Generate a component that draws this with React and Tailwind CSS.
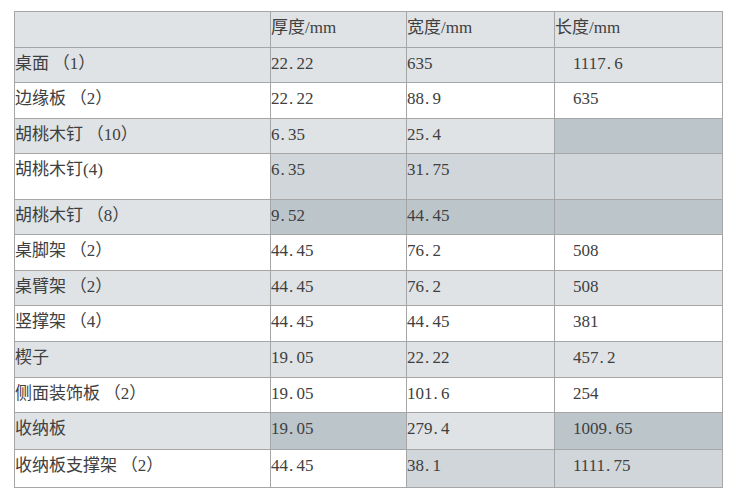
import React from "react";

const L = "bg-[#dfe3e6]";
const D = "bg-[#bcc5ca]";
const M = "bg-[#d1d6da]";
const W = "bg-white";

const rows = [
  { h: "h-[36px]", c: ["", "厚度/mm", "宽度/mm", "长度/mm"], bg: [L, L, L, L], head: true },
  { h: "h-[35px]", c: ["桌面 （1）", "22.22", "635", "1117.6"], bg: [L, L, L, L] },
  { h: "h-[36px]", c: ["边缘板 （2）", "22.22", "88.9", "635"], bg: [W, W, W, W] },
  { h: "h-[35px]", c: ["胡桃木钉 （10）", "6.35", "25.4", ""], bg: [L, L, L, D] },
  { h: "h-[46px]", c: ["胡桃木钉(4)", "6.35", "31.75", ""], bg: [W, M, M, M] },
  { h: "h-[35px]", c: ["胡桃木钉 （8）", "9.52", "44.45", ""], bg: [L, D, D, D] },
  { h: "h-[36px]", c: ["桌脚架 （2）", "44.45", "76.2", "508"], bg: [W, W, W, W] },
  { h: "h-[35px]", c: ["桌臂架 （2）", "44.45", "76.2", "508"], bg: [L, L, L, L] },
  { h: "h-[36px]", c: ["竖撑架 （4）", "44.45", "44.45", "381"], bg: [W, W, W, W] },
  { h: "h-[36px]", c: ["楔子", "19.05", "22.22", "457.2"], bg: [L, L, L, L] },
  { h: "h-[35px]", c: ["侧面装饰板 （2）", "19.05", "101.6", "254"], bg: [W, W, W, W] },
  { h: "h-[37px]", c: ["收纳板", "19.05", "279.4", "1009.65"], bg: [L, D, L, D] },
  { h: "h-[38px]", c: ["收纳板支撑架 （2）", "44.45", "38.1", "1111.75"], bg: [W, W, M, M] },
];

function Ascii({ s }) {
  const bits = s.split(/(\.)/).filter((p) => p !== "");
  return (
    <span className="font-['Liberation_Serif',serif] text-[17px]">
      {bits.map((b, i) =>
        b === "." ? (
          <span key={i} className="inline-block w-[8.5px] pl-[1px]">
            .
          </span>
        ) : (
          <span key={i}>{b}</span>
        )
      )}
    </span>
  );
}

function T({ s }) {
  const parts = s.split(/([\x21-\x7e]+)/).filter((p) => p !== "");
  return (
    <>
      {parts.map((p, i) =>
        /^[\x21-\x7e]+$/.test(p) ? <Ascii key={i} s={p} /> : <span key={i}>{p}</span>
      )}
    </>
  );
}

const widths = ["w-[256px]", "w-[136px]", "w-[148px]", "w-[168px]"];

export default function App() {
  return (
    <div className="w-[738px] h-[500px] bg-white pt-[11px] pl-[14px] font-['Noto_Sans_CJK_SC',sans-serif] text-[17px] text-[#404040]">
      <div className="w-[709px] border-t border-l border-[#a6a6a6]">
        {rows.map((r, ri) => (
          <div key={ri} className={`flex ${r.h}`}>
            {r.c.map((c, ci) => (
              <div
                key={ci}
                className={`${widths[ci]} ${r.bg[ci]} ${ci === 3 && !r.head ? "pl-[18px]" : "pl-0"} shrink-0 border-r border-b border-[#a6a6a6] pt-[2px] leading-[24px] whitespace-pre`}
              >
                <T s={c} />
              </div>
            ))}
          </div>
        ))}
      </div>
    </div>
  );
}
